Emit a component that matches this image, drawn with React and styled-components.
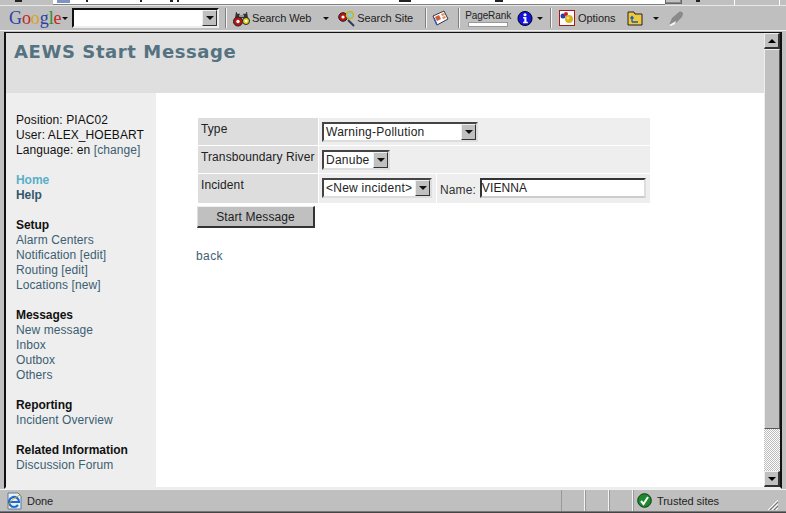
import React from "react";
import styled, { createGlobalStyle } from "styled-components";

const GlobalStyle = createGlobalStyle`
  html, body, #root {
    margin: 0;
    height: 100%;
    overflow: hidden;
  }
  body {
    background: #c0c0c0;
    font-family: "Liberation Sans", Arial, sans-serif;
    font-size: 12px;
    color: #111;
  }
`;

const Window = styled.div`
  width: 786px;
  height: 513px;
  display: flex;
  flex-direction: column;
  background: #c0c0c0;
`;

/* address bar, cut off by the top of the picture */
const AddressStrip = styled.div`
  height: 5px;
  flex: none;
  display: flex;
  align-items: flex-start;
  overflow: hidden;
  background: #c0c0c0;
`;

const AddressField = styled.div`
  width: 612px;
  height: 4px;
  margin-left: 31px;
  display: flex;
  align-items: flex-start;
  background: #fff;
  border-bottom: 1px solid #808080;
`;

const StripMark = styled.div`
  flex: none;
  width: ${(p) => p.$w}px;
  height: ${(p) => p.$h || 2}px;
  margin-left: ${(p) => p.$ml}px;
  background: ${(p) => p.$c || "#222"};
`;

const AddressGo = styled.div`
  width: 15px;
  height: 3px;
  background: #c0c0c0;
  border: 1px solid #666;
  border-top: 0;
  box-shadow: inset -1px -1px 0 #888;
`;

const StripEdge = styled.div`
  width: 1px;
  height: 5px;
  margin-left: ${(p) => p.$ml}px;
  background: #fff;
`;

const Toolbar = styled.div`
  height: 26px;
  flex: none;
  box-sizing: border-box;
  display: flex;
  align-items: center;
  border-top: 1px solid #e8e8e8;
  border-bottom: 1px solid #f2f2f2;
  background: #bfbfbf;
  font-size: 11px;
  letter-spacing: -0.1px;
  color: #222;
`;

const Logo = styled.div`
  margin-left: 9px;
  font-family: "Liberation Serif", serif;
  font-size: 18px;
  line-height: 20px;
  width: 50px;
`;

const LogoLetter = styled.span`
  color: ${(p) => p.$c};
`;

const Caret = styled.span`
  flex: none;
  width: 0;
  height: 0;
  margin-left: ${(p) => p.$ml || 0}px;
  border-left: 3px solid transparent;
  border-right: 3px solid transparent;
  border-top: 3px solid #111;
`;

const SearchCombo = styled.div`
  width: 143px;
  height: 16px;
  margin-left: 4px;
  display: flex;
  justify-content: flex-end;
  background: #fff;
  border: 2px solid;
  border-color: #111 #eee #eee #111;
`;

const ComboButton = styled.div`
  width: 15px;
  height: 16px;
  display: flex;
  align-items: center;
  justify-content: center;
  background: #c0c0c0;
  box-sizing: border-box;
  border: 1px solid;
  border-color: #eee #333 #333 #eee;
`;

const Divider = styled.div`
  flex: none;
  width: 1px;
  height: 20px;
  margin-left: ${(p) => p.$ml}px;
  background: #808080;
  border-right: 1px solid #f4f4f4;
`;

const ToolIcon = styled.svg`
  flex: none;
  width: ${(p) => p.$w || 17}px;
  height: 17px;
  margin-left: ${(p) => p.$ml || 0}px;
`;

const ToolLabel = styled.span`
  margin-left: ${(p) => p.$ml || 2}px;
  white-space: nowrap;
`;

const RankBox = styled.div`
  margin-left: 6px;
  width: 44px;
  display: flex;
  flex-direction: column;
  align-items: center;
  font-size: 10px;
  line-height: 11px;
`;

const RankBar = styled.div`
  width: 38px;
  height: 3px;
  margin-top: 1px;
  background: #fff;
  border: 1px solid #999;
`;

const Frame = styled.div`
  flex: 1;
  display: flex;
  min-height: 0;
  margin: 1px 0 0 4px;
`;

const Viewport = styled.div`
  width: 778px;
  display: flex;
  border: solid #111;
  border-width: 1px 2px 2px 2px;
  border-bottom-color: #ededed;
  box-sizing: border-box;
`;

const Page = styled.div`
  width: 758px;
  flex: none;
  display: flex;
  flex-direction: column;
  background: #fff;
`;

const Banner = styled.div`
  height: 60px;
  flex: none;
  padding: 7px 0 0 8px;
  box-sizing: border-box;
  background: #dfdfdf;
`;

const Title = styled.h1`
  margin: 0;
  font-family: "DejaVu Sans", Verdana, sans-serif;
  font-size: 18px;
  line-height: 24px;
  font-weight: 700;
  letter-spacing: 0.6px;
  color: #54727f;
`;

const Body = styled.div`
  flex: 1;
  display: flex;
  min-height: 0;
`;

const Sidebar = styled.nav`
  width: 150px;
  flex: none;
  box-sizing: border-box;
  padding: 20px 0 0 10px;
  background: #eeeeee;
  line-height: 15px;
  letter-spacing: 0.08px;
`;

const NavGroup = styled.div`
  margin-bottom: 15px;
`;

const Line = styled.div`
  white-space: nowrap;
`;

const NavHead = styled.div`
  font-weight: 700;
  letter-spacing: -0.05px;
  color: #111;
`;

const NavLink = styled.a`
  display: block;
  color: #3b6072;
`;

const BoldLink = styled.a`
  display: block;
  font-weight: 700;
  letter-spacing: -0.05px;
  color: ${(p) => p.$c};
`;

const InlineLink = styled.a`
  color: #3b6072;
`;

const Content = styled.main`
  flex: 1;
  padding: 24px 0 0 41px;
  letter-spacing: 0.1px;
`;

const FormTable = styled.div`
  width: 452px;
  padding: 1px 0 0 1px;
  display: grid;
  grid-template-columns: 120px 1fr;
  gap: 1px;
`;

const LabelCell = styled.div`
  height: ${(p) => p.$h}px;
  padding: 4px 0 0 3px;
  box-sizing: border-box;
  background: #dddddd;
  line-height: 15px;
  white-space: nowrap;
  color: #222;
`;

const ValueCell = styled.div`
  height: ${(p) => p.$h}px;
  padding: 4px 0 0 3px;
  box-sizing: border-box;
  background: #eeeeee;
  display: flex;
`;

const SelectBox = styled.div`
  width: ${(p) => p.$w}px;
  height: 20px;
  display: flex;
  justify-content: space-between;
  box-sizing: border-box;
  background: #fff;
  border: 2px solid;
  border-color: #444 #ddd #ddd #444;
  line-height: 16px;
  padding-left: 2px;
  letter-spacing: 0.25px;
  white-space: nowrap;
  color: #222;
`;

const SelectButton = styled(ComboButton)`
  flex: none;
  height: 16px;
`;

const NameCell = styled.div`
  margin: -4px 0 0 4px;
  padding: 2px 0 0 3px;
  width: 213px;
  height: 29px;
  box-sizing: border-box;
  border-left: 1px solid #fff;
  display: flex;
  align-items: center;
  color: #333;
`;

const NameInput = styled.div`
  width: 166px;
  height: 20px;
  margin: -4px 0 0 4px;
  box-sizing: border-box;
  background: #fff;
  border: 2px solid;
  border-color: #333 #ddd #ccc #333;
  line-height: 16px;
  color: #222;
`;

const StartButton = styled.div`
  width: 118px;
  height: 22px;
  margin-top: 3px;
  box-sizing: border-box;
  background: #c0c0c0;
  border-top: 1px solid #eee;
  border-left: 1px solid #ddd;
  border-right: 2px solid #333;
  border-bottom: 2px solid #333;
  text-align: center;
  line-height: 20px;
  color: #222;
`;

const BackLink = styled.a`
  display: block;
  margin: 21px 0 0 -1px;
  line-height: 15px;
  letter-spacing: 0.4px;
  color: #3b6072;
`;

const Scrollbar = styled.div`
  width: 16px;
  flex: none;
  display: flex;
  flex-direction: column;
  background-color: #fff;
  background-image: conic-gradient(#bbb 25%, #fff 0 50%, #bbb 0 75%, #fff 0);
  background-size: 2px 2px;
`;

const ScrollButton = styled.div`
  width: 16px;
  height: 16px;
  flex: none;
  box-sizing: border-box;
  display: flex;
  align-items: center;
  justify-content: center;
  background: #c0c0c0;
  border-top: 1px solid #eee;
  border-left: 1px solid #eee;
  border-right: 2px solid #333;
  border-bottom: 2px solid #333;
`;

const ScrollThumb = styled.div`
  height: ${(p) => p.$h}px;
  flex: none;
  box-sizing: border-box;
  background: #c0c0c0;
  border-top: 1px solid #eee;
  border-left: 1px solid #eee;
  border-right: 1px solid #555;
  border-bottom: 1px solid #555;
`;

const ScrollGap = styled.div`
  flex: 1;
`;

const Arrow = styled.span`
  width: 0;
  height: 0;
  border-left: 4px solid transparent;
  border-right: 4px solid transparent;
  ${(p) => (p.$up ? "border-bottom: 4px solid #000;" : "border-top: 4px solid #000;")}
`;

const SmallArrow = styled.span`
  width: 0;
  height: 0;
  border-left: 4px solid transparent;
  border-right: 4px solid transparent;
  border-top: 4px solid #111;
`;

const StatusBar = styled.div`
  height: 21px;
  flex: none;
  margin-bottom: 2px;
  display: flex;
  align-items: stretch;
  background: #bfbfbf;
  border-top: 1px solid #f0f0f0;
  box-shadow: 0 1px 0 #777, 0 2px 0 #444;
  font-size: 11px;
  letter-spacing: -0.05px;
  color: #222;
`;

const StatusMain = styled.div`
  width: 561px;
  flex: none;
  display: flex;
  align-items: center;
  padding-left: 6px;
  box-sizing: border-box;
`;

const StatusCell = styled.div`
  width: 22px;
  flex: none;
  border-left: 1px solid #999;
  border-right: 1px solid #f4f4f4;
`;

const TrustedCell = styled.div`
  flex: 1;
  display: flex;
  align-items: center;
  position: relative;
  padding-left: 3px;
  border-left: 1px solid #999;
`;

const Grip = styled.svg`
  position: absolute;
  right: 7px;
  bottom: 0;
  width: 12px;
  height: 12px;
`;

const links = [
  {
    head: "Setup",
    items: ["Alarm Centers", "Notification [edit]", "Routing [edit]", "Locations [new]"],
  },
  { head: "Messages", items: ["New message", "Inbox", "Outbox", "Others"] },
  { head: "Reporting", items: ["Incident Overview"] },
  { head: "Related Information", items: ["Discussion Forum"] },
];

const google = [
  ["G", "#2a3fa8"],
  ["o", "#c8261c"],
  ["o", "#d8a51c"],
  ["g", "#2a3fa8"],
  ["l", "#2f8f30"],
  ["e", "#c8261c"],
];

// tips of the address text that stick out under the top edge: [gap, width]
const addressMarks = [
  [16, 2],
  [52, 2],
  [28, 3],
  [4, 2],
  [220, 12],
  [84, 8],
];

const Binoculars = () => (
  <ToolIcon $ml={6} viewBox="0 0 17 17">
    <path d="M3 2l3 1 1 2h3l1-2 3-1 1 6H2z" fill="#333" />
    <path d="M4 3h2M11 3h2M6 6h5" stroke="#fff" strokeWidth="1" />
    <circle cx="5" cy="11.500" r="4.500" fill="#b81414" stroke="#222" />
    <circle cx="5" cy="11.500" r="1.700" fill="#fff" />
    <circle cx="13" cy="11" r="3.500" fill="#e6d21e" stroke="#222" />
    <circle cx="13" cy="11" r="1.300" fill="#fff" />
  </ToolIcon>
);

const Magnifier = () => (
  <ToolIcon $ml={9} viewBox="0 0 17 17">
    <path d="M10 10l6 6" stroke="#2b3a55" strokeWidth="2" />
    <circle cx="5" cy="7" r="4.300" fill="#b81414" stroke="#222" />
    <circle cx="5" cy="7" r="1.600" fill="#fff" />
    <circle cx="12" cy="5" r="3.400" fill="#8cc8e8" stroke="#c8b818" strokeWidth="1.600" />
  </ToolIcon>
);

const NewsIcon = () => (
  <ToolIcon $ml={5} viewBox="0 0 17 17">
    <path d="M1 6l11-5 4 8-11 6z" fill="#fff" stroke="#334" />
    <path d="M3 7l4-2 2 4-4 2z" fill="#d25a3a" />
    <path d="M9 4l3-1 1 2-3 1zM10 7l3-1 1 2-3 1z" fill="#e0905c" />
    <path d="M2 8l3 7" stroke="#3a5aa8" strokeWidth="1.500" />
  </ToolIcon>
);

const InfoIcon = () => (
  <ToolIcon $ml={7} $w={16} viewBox="0 0 17 17">
    <circle cx="8.500" cy="8.500" r="7.500" fill="#1414e0" stroke="#000" />
    <circle cx="8.500" cy="4.500" r="1.600" fill="#fff" />
    <path d="M6.500 7h3.500v5h1.500v1.500h-5V12h1.300V8.500H6.500z" fill="#fff" />
  </ToolIcon>
);

const OptionsIcon = () => (
  <ToolIcon $ml={7} viewBox="0 0 17 17">
    <rect x="0.500" y="0.500" width="15" height="15" fill="#fff" stroke="#a81818" />
    <circle cx="4" cy="6" r="2.500" fill="#2840a8" />
    <circle cx="7" cy="4" r="2" fill="#c82020" />
    <circle cx="10" cy="9" r="4" fill="#d8b020" />
    <circle cx="9" cy="8" r="1.500" fill="#f0e080" />
  </ToolIcon>
);

const FolderIcon = () => (
  <ToolIcon $ml={12} viewBox="0 0 17 17">
    <path d="M1 4V2h6l1 2h7v11H1z" fill="#f0c83c" stroke="#222" />
    <path d="M5 12h6M5 12V7M3.500 8.500L5 6.500l1.500 2" fill="none" stroke="#1a5ab8" strokeWidth="1.300" />
  </ToolIcon>
);

const Feather = () => (
  <ToolIcon $ml={9} viewBox="0 0 17 17">
    <path d="M1 15l3-7 7-6c2-1 4 0 4 2l-1 3-6 6z" fill="#8a8a8a" />
    <path d="M1 15l7-4-1 3-4 2z" fill="#f4f4f4" />
  </ToolIcon>
);

const IeIcon = () => (
  <svg width="18" height="18" viewBox="0 0 18 18">
    <path d="M2 1h10l3 3v13H2z" fill="#e8f0f8" stroke="#5a7a9a" />
    <path
      d="M4 10h9A5 5 0 1 0 12 13"
      fill="none"
      stroke="#1c6ad0"
      strokeWidth="2.200"
    />
    <path d="M1 15C4 9 10 4 15 3" fill="none" stroke="#d8a020" strokeWidth="1" />
  </svg>
);

const TrustedIcon = () => (
  <svg width="15" height="15" viewBox="0 0 15 15">
    <circle cx="7.500" cy="7.500" r="6.800" fill="#1c8a2c" stroke="#0c3a14" />
    <path d="M4 8l2.500 3L11 4" fill="none" stroke="#fff" strokeWidth="2" />
  </svg>
);

export default function App() {
  return (
    <>
      <GlobalStyle />
      <Window>
        <AddressStrip>
          <StripMark $ml={15} $w={7} />
          <AddressField>
            <StripMark $ml={4} $w={13} $h={3} $c="#7f93c4" />
            {addressMarks.map(([gap, width], i) => (
              <StripMark key={i} $ml={gap} $w={width} />
            ))}
          </AddressField>
          <AddressGo />
          <StripMark $ml={14} $w={4} />
          <StripEdge $ml={34} />
          <StripEdge $ml={44} />
        </AddressStrip>
        <Toolbar>
          <Logo>
            {google.map(([letter, colour], i) => (
              <LogoLetter key={i} $c={colour}>
                {letter}
              </LogoLetter>
            ))}
          </Logo>
          <Caret $ml={3} />
          <SearchCombo>
            <ComboButton>
              <SmallArrow />
            </ComboButton>
          </SearchCombo>
          <Divider $ml={6} />
          <Binoculars />
          <ToolLabel>Search Web</ToolLabel>
          <Caret $ml={12} />
          <Magnifier />
          <ToolLabel>Search Site</ToolLabel>
          <Divider $ml={12} />
          <NewsIcon />
          <Divider $ml={9} />
          <RankBox>
            PageRank
            <RankBar />
          </RankBox>
          <InfoIcon />
          <Caret $ml={4} />
          <Divider $ml={7} />
          <OptionsIcon />
          <ToolLabel>Options</ToolLabel>
          <FolderIcon />
          <Caret $ml={9} />
          <Feather />
        </Toolbar>
        <Frame>
          <Viewport>
            <Page>
              <Banner>
                <Title>AEWS Start Message</Title>
              </Banner>
              <Body>
                <Sidebar>
                  <NavGroup>
                    <Line>Position: PIAC02</Line>
                    <Line>User: ALEX_HOEBART</Line>
                    <Line>
                      Language: en <InlineLink>[change]</InlineLink>
                    </Line>
                  </NavGroup>
                  <NavGroup>
                    <BoldLink $c="#5aafc7">Home</BoldLink>
                    <BoldLink $c="#33566b">Help</BoldLink>
                  </NavGroup>
                  {links.map((group) => (
                    <NavGroup key={group.head}>
                      <NavHead>{group.head}</NavHead>
                      {group.items.map((item) => (
                        <NavLink key={item}>{item}</NavLink>
                      ))}
                    </NavGroup>
                  ))}
                </Sidebar>
                <Content>
                  <FormTable>
                    <LabelCell $h={27}>Type</LabelCell>
                    <ValueCell $h={27}>
                      <SelectBox $w={156}>
                        Warning-Pollution
                        <SelectButton>
                          <SmallArrow />
                        </SelectButton>
                      </SelectBox>
                    </ValueCell>
                    <LabelCell $h={27}>Transboundary River</LabelCell>
                    <ValueCell $h={27}>
                      <SelectBox $w={68}>
                        Danube
                        <SelectButton>
                          <SmallArrow />
                        </SelectButton>
                      </SelectBox>
                    </ValueCell>
                    <LabelCell $h={29}>Incident</LabelCell>
                    <ValueCell $h={29}>
                      <SelectBox $w={110}>
                        &lt;New incident&gt;
                        <SelectButton>
                          <SmallArrow />
                        </SelectButton>
                      </SelectBox>
                      <NameCell>
                        Name:
                        <NameInput>VIENNA</NameInput>
                      </NameCell>
                    </ValueCell>
                  </FormTable>
                  <StartButton>Start Message</StartButton>
                  <BackLink>back</BackLink>
                </Content>
              </Body>
            </Page>
            <Scrollbar>
              <ScrollButton>
                <Arrow $up />
              </ScrollButton>
              <ScrollThumb $h={380} />
              <ScrollGap />
              <ScrollButton>
                <Arrow />
              </ScrollButton>
            </Scrollbar>
          </Viewport>
        </Frame>
        <StatusBar>
          <StatusMain>
            <IeIcon />
            <ToolLabel $ml={3}>Done</ToolLabel>
          </StatusMain>
          <StatusCell />
          <StatusCell />
          <StatusCell />
          <TrustedCell>
            <TrustedIcon />
            <ToolLabel $ml={5}>Trusted sites</ToolLabel>
            <Grip viewBox="0 0 12 12">
              <path d="M11 1L1 11M11 5L5 11M11 9L9 11" stroke="#fff" strokeWidth="1" />
              <path d="M11 3L3 11M11 7L7 11" stroke="#777" strokeWidth="1" />
            </Grip>
          </TrustedCell>
        </StatusBar>
      </Window>
    </>
  );
}
